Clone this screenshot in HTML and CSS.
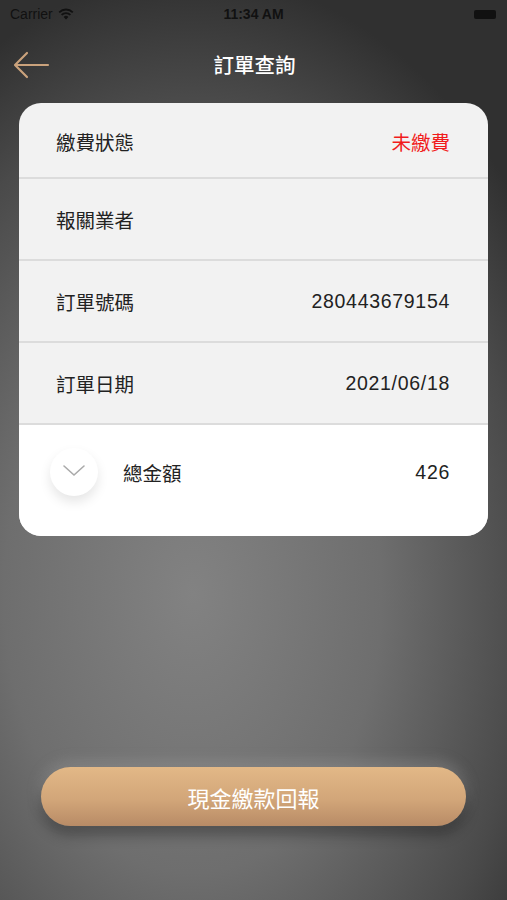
FILE: index.html
```html
<!DOCTYPE html>
<html lang="zh-Hant">
<head>
  <meta charset="UTF-8" />
  <meta name="viewport" content="width=device-width, initial-scale=1.0"/>
  <title>訂單查詢</title>
  <link rel="stylesheet" href="styles.css">
</head>
<body>
  <div class="status-bar">
    <div class="carrier">
      Carrier
      <svg class="wifi" width="16" height="12" viewBox="0 0 16 12">
        <path d="M8 11.5 L5.6 8.9 A3.4 3.4 0 0 1 10.4 8.9 Z" fill="#111"/>
        <path d="M3.6 6.9 A6.2 6.2 0 0 1 12.4 6.9" stroke="#111" stroke-width="1.8" fill="none"/>
        <path d="M1.2 4.3 A9.6 9.6 0 0 1 14.8 4.3" stroke="#111" stroke-width="1.8" fill="none"/>
      </svg>
    </div>
    <div class="time">11:34 AM</div>
    <div class="battery"><span></span></div>
  </div>

  <header class="nav">
    <svg class="back" width="40" height="32" viewBox="0 0 40 32">
      <path d="M36 16 H4 M15 4 L3 16 L15 28" stroke="#caa27c" stroke-width="2.2" fill="none" stroke-linecap="round" stroke-linejoin="round"/>
    </svg>
    <h1>訂單查詢</h1>
  </header>

  <div class="card">
    <div class="row first">
      <span class="label">繳費狀態</span>
      <span class="value unpaid">未繳費</span>
    </div>
    <div class="row">
      <span class="label">報關業者</span>
      <span class="value"></span>
    </div>
    <div class="row">
      <span class="label">訂單號碼</span>
      <span class="value">280443679154</span>
    </div>
    <div class="row">
      <span class="label">訂單日期</span>
      <span class="value">2021/06/18</span>
    </div>
    <div class="total-row">
      <div class="toggle">
        <svg width="24" height="14" viewBox="0 0 24 14">
          <path d="M2 2 L12 11 L22 2" stroke="#aaaaaa" stroke-width="1.6" fill="none" stroke-linecap="round"/>
        </svg>
      </div>
      <span class="label">總金額</span>
      <span class="value">426</span>
    </div>
  </div>

  <div class="actions">
    <button class="report-btn">現金繳款回報</button>
  </div>
</body>
</html>
```

FILE: styles.css
```css
body {
  margin: 0;
  width: 507px;
  height: 900px;
  overflow: hidden;
  font-family: "Noto Sans CJK TC", "Noto Sans", sans-serif;
  background: radial-gradient(ellipse 420px 620px at 38% 66%, #828282 0%, #6e6e6e 45%, #4a4a4a 80%, #303030 100%);
  background-color: #2c2c2c;
}
.status-bar {
  height: 28px;
  padding: 0 10px;
  display: flex;
  align-items: center;
  justify-content: space-between;
  color: #111;
  font-family: "Liberation Sans", Arial, sans-serif;
  font-size: 14px;
}
.carrier {
  display: flex;
  align-items: center;
  gap: 5px;
  width: 80px;
}
.time {
  font-weight: bold;
}
.battery {
  width: 80px;
  display: flex;
  justify-content: flex-end;
}
.battery span {
  display: block;
  width: 22px;
  height: 9px;
  background: #111;
  border-radius: 2px;
  margin-right: 1px;
}
.nav {
  height: 75px;
  display: flex;
  align-items: center;
  justify-content: center;
  position: relative;
}
.nav .back {
  position: absolute;
  left: 12px;
  top: 21px;
}
.nav h1 {
  margin: -3px 0 0 2px;
  color: #fff;
  font-size: 20.5px;
  font-weight: 500;
}
.card {
  margin: 0 19px;
  background: #f2f2f2;
  border-radius: 22px;
  overflow: hidden;
}
.row {
  height: 80px;
  padding: 0 38px 0 37px;
  display: flex;
  align-items: center;
  justify-content: space-between;
  border-bottom: 2px solid #dcdcdc;
}
.row.first {
  height: 76px;
  padding-top: 2px;
  box-sizing: border-box;
}
.label {
  font-size: 19.5px;
  color: #222;
}
.value {
  font-size: 19.5px;
  letter-spacing: 0.7px;
  color: #222;
  font-family: "Liberation Sans", Arial, "Noto Sans CJK TC", sans-serif;
}
.value.unpaid {
  color: #f11c1c;
  letter-spacing: 0;
  font-family: "Noto Sans CJK TC", sans-serif;
}
.total-row {
  background: #fff;
  height: 111px;
  box-sizing: border-box;
  padding: 0 38px 17px 31px;
  display: flex;
  align-items: center;
}
.total-row .label {
  flex: 1;
  margin-left: 25px;
}
.toggle {
  width: 48px;
  height: 48px;
  border-radius: 50%;
  background: #fff;
  box-shadow: 0 6px 12px rgba(0, 0, 0, 0.1);
  display: flex;
  align-items: center;
  justify-content: center;
}
.toggle svg {
  margin-top: -3px;
}
.actions {
  margin-top: 231px;
  padding: 0 41px;
}
.report-btn {
  width: 100%;
  height: 59px;
  border: none;
  border-radius: 30px;
  background: linear-gradient(#e2b887, #d2a679 55%, #b88b66);
  color: #fff;
  font-family: "Noto Sans CJK TC", sans-serif;
  font-size: 22px;
  box-shadow: 0 9px 14px rgba(0, 0, 0, 0.3), 0 -5px 14px rgba(170, 170, 170, 0.35);
}
```
